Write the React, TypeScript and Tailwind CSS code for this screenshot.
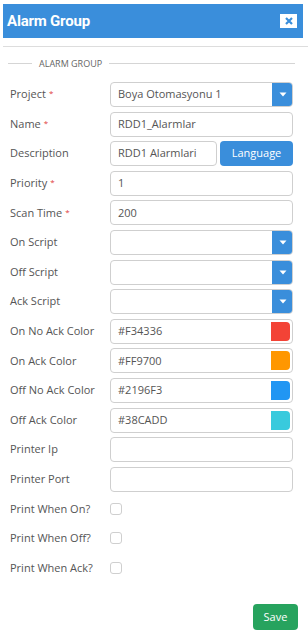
import React from 'react';

type Row =
  | { label: string; req?: boolean; kind: 'text'; value?: string }
  | { label: string; req?: boolean; kind: 'select'; value?: string }
  | { label: string; req?: boolean; kind: 'lang'; value: string }
  | { label: string; req?: boolean; kind: 'color'; value: string; swatch: string };

const rows: Row[] = [
  { label: 'Project', req: true, kind: 'select', value: 'Boya Otomasyonu 1' },
  { label: 'Name', req: true, kind: 'text', value: 'RDD1_Alarmlar' },
  { label: 'Description', kind: 'lang', value: 'RDD1 Alarmlari' },
  { label: 'Priority', req: true, kind: 'text', value: '1' },
  { label: 'Scan Time', req: true, kind: 'text', value: '200' },
  { label: 'On Script', kind: 'select' },
  { label: 'Off Script', kind: 'select' },
  { label: 'Ack Script', kind: 'select' },
  { label: 'On No Ack Color', kind: 'color', value: '#F34336', swatch: '#f34336' },
  { label: 'On Ack Color', kind: 'color', value: '#FF9700', swatch: '#ff9700' },
  { label: 'Off No Ack Color', kind: 'color', value: '#2196F3', swatch: '#2196f3' },
  { label: 'Off Ack Color', kind: 'color', value: '#38CADD', swatch: '#38cadd' },
  { label: 'Printer Ip', kind: 'text' },
  { label: 'Printer Port', kind: 'text' },
];

const checks = ['Print When On?', 'Print When Off?', 'Print When Ack?'];

const Caret = () => (
  <svg width="8" height="5" viewBox="0 0 8 5">
    <path d="M0.5 0.5 H7.5 L4 4.5 Z" fill="#fff" />
  </svg>
);

const Field: React.FC<{ row: Row }> = ({ row }) => {
  const box = 'h-full border border-[#cfcfcf] rounded-[4px] bg-white flex items-center text-[11px] text-[#555]';
  if (row.kind === 'select') {
    return (
      <div className={`${box} w-full overflow-hidden`}>
        <span className="flex-1 pl-[7px]">{row.value}</span>
        <span className="w-[21px] h-[calc(100%+2px)] -mr-px bg-[#3a8edb] flex items-center justify-center">
          <Caret />
        </span>
      </div>
    );
  }
  if (row.kind === 'lang') {
    return (
      <div className="flex h-full gap-[3px] w-full">
        <div className={`${box} flex-1 pl-[7px]`}>{row.value}</div>
        <button className="w-[73px] h-full rounded-[4px] bg-[#3a8edb] text-white text-[11px]">Language</button>
      </div>
    );
  }
  if (row.kind === 'color') {
    return (
      <div className={`${box} w-full pl-[7px] pr-[2px]`}>
        <span className="flex-1">{row.value}</span>
        <span className="w-[19px] h-[calc(100%-4px)] rounded-r-[4px]" style={{ backgroundColor: row.swatch }} />
      </div>
    );
  }
  return <div className={`${box} w-full pl-[7px]`}>{row.value}</div>;
};

export default function App() {
  return (
    <div className="w-[308px] h-[636px] bg-white relative" style={{ fontFamily: '"Open Sans", "Liberation Sans", sans-serif' }}>
      <div className="pt-[4px] px-[3px] pr-[5px]">
        <div className="h-[34px] bg-[#3a8edb] flex items-center justify-between pl-[4px] pr-[6px]">
          <span className="text-white text-[15px] font-bold tracking-[-0.2px]" style={{ fontFamily: 'Roboto, "Liberation Sans", sans-serif' }}>
            Alarm Group
          </span>
          <span className="w-[17px] h-[14px] bg-white flex items-center justify-center">
            <svg width="8" height="8" viewBox="0 0 8 8">
              <path d="M1 1 L7 7 M7 1 L1 7" stroke="#3a8edb" strokeWidth="2.2" />
            </svg>
          </span>
        </div>
      </div>
      <div className="ml-[3px] mt-[8px] h-px bg-[#dddddd]" />

      <div className="flex items-center mt-[12px] pl-[8px] pr-[13px]">
        <div className="w-[24px] h-px bg-[#d5d5d5]" />
        <span className="px-[7px] text-[9px] text-[#666] leading-none">ALARM GROUP</span>
        <div className="flex-1 h-px bg-[#d5d5d5]" />
      </div>

      <div className="mt-[14px] pl-[10px] pr-[15px] flex flex-col gap-[4.6px]">
        {rows.map((r) => (
          <div key={r.label} className="flex items-center h-[25px]">
            <div className="w-[100px] text-[11px] text-[#555]">
              {r.label}
              {r.req && <span className="text-[#e03a3a] ml-[3px] text-[8px] align-top relative top-[1px]">*</span>}
            </div>
            <div className="flex-1 h-full flex">
              <Field row={r} />
            </div>
          </div>
        ))}
        {checks.map((c) => (
          <div key={c} className="flex items-center h-[25px]">
            <div className="w-[100px] text-[11px] text-[#555]">{c}</div>
            <span className="w-[12px] h-[12px] border border-[#cfcfcf] rounded-[3px] bg-white" />
          </div>
        ))}
      </div>

      <div className="absolute left-[253px] top-[603px]">
        <button className="w-[45px] h-[26px] rounded-[4px] bg-[#27a35e] text-white text-[11px]">Save</button>
      </div>
    </div>
  );
}
